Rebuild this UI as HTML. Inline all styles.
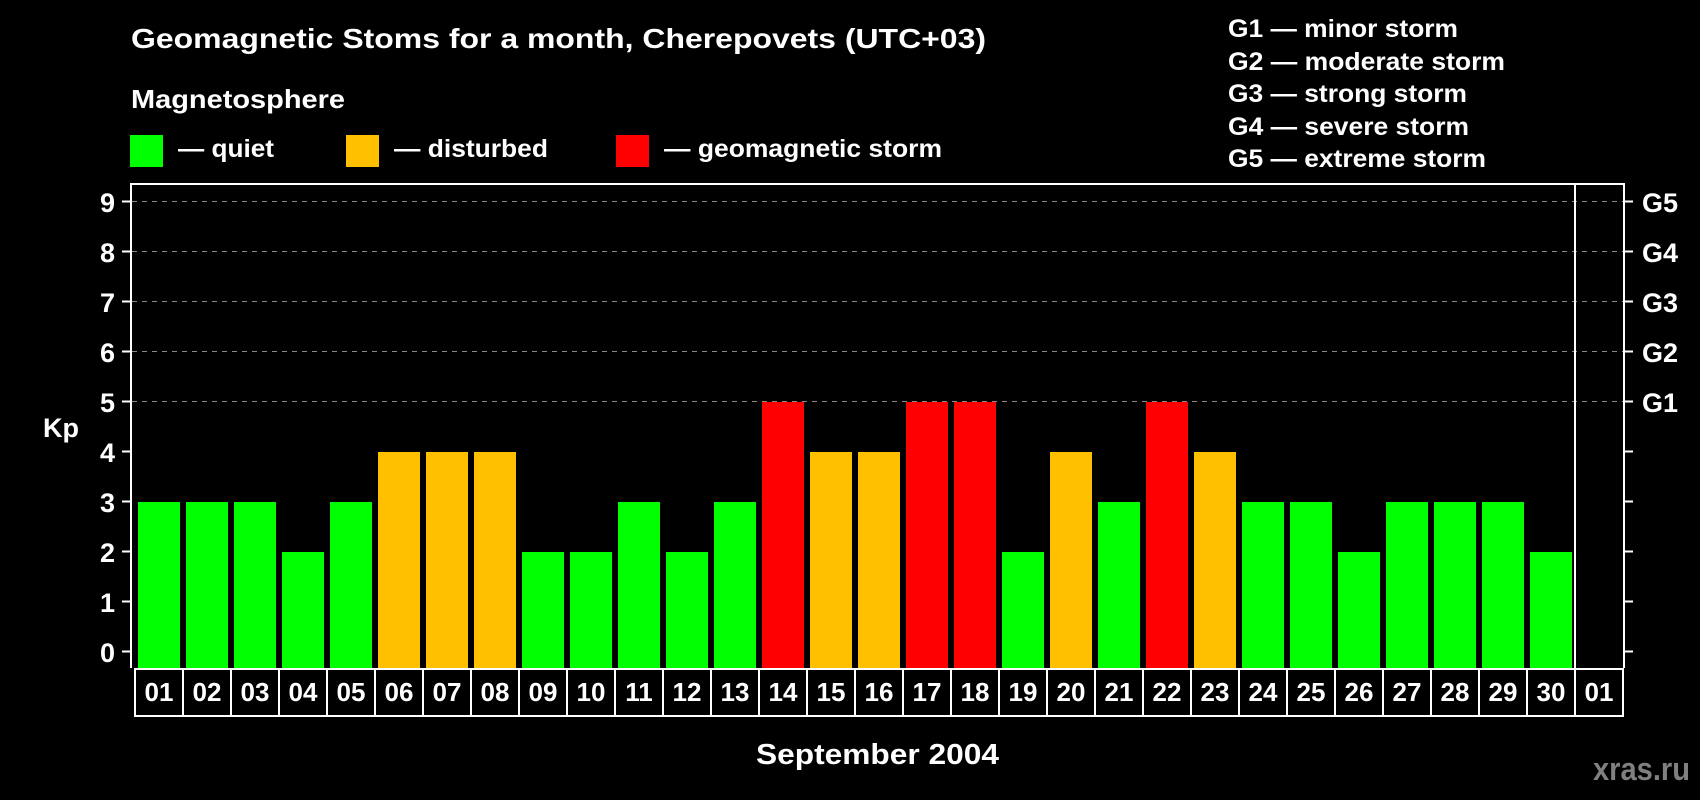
<!DOCTYPE html>
<html><head><meta charset="utf-8"><style>
html,body{margin:0;padding:0;background:#000;width:1700px;height:800px;overflow:hidden}
svg{display:block}
text{font-family:"Liberation Sans",Arial,sans-serif;font-weight:bold;fill:#fff}
</style></head><body>
<svg width="1700" height="800" viewBox="0 0 1700 800" xmlns="http://www.w3.org/2000/svg">
<rect width="1700" height="800" fill="#000"/>
<text x="131" y="48" font-size="28" textLength="855" lengthAdjust="spacingAndGlyphs">Geomagnetic Stoms for a month, Cherepovets (UTC+03)</text>
<text x="131" y="108" font-size="26" textLength="214" lengthAdjust="spacingAndGlyphs">Magnetosphere</text>
<rect x="130" y="135" width="33" height="32" fill="#00ff00"/>
<rect x="346" y="135" width="33" height="32" fill="#ffc000"/>
<rect x="616" y="135" width="33" height="32" fill="#ff0000"/>
<text x="178" y="157" font-size="25" textLength="96" lengthAdjust="spacingAndGlyphs">— quiet</text>
<text x="394" y="157" font-size="25" textLength="154" lengthAdjust="spacingAndGlyphs">— disturbed</text>
<text x="664" y="157" font-size="25" textLength="278" lengthAdjust="spacingAndGlyphs">— geomagnetic storm</text>
<g font-size="25">
<text x="1228" y="37" textLength="230" lengthAdjust="spacingAndGlyphs">G1 — minor storm</text>
<text x="1228" y="70" textLength="277" lengthAdjust="spacingAndGlyphs">G2 — moderate storm</text>
<text x="1228" y="102" textLength="239" lengthAdjust="spacingAndGlyphs">G3 — strong storm</text>
<text x="1228" y="135" textLength="241" lengthAdjust="spacingAndGlyphs">G4 — severe storm</text>
<text x="1228" y="167" textLength="258" lengthAdjust="spacingAndGlyphs">G5 — extreme storm</text>
</g>
<g stroke="#888" stroke-width="1" stroke-dasharray="5,5">
<line x1="132" y1="201.5" x2="1624" y2="201.5"/>
<line x1="132" y1="251.5" x2="1624" y2="251.5"/>
<line x1="132" y1="301.5" x2="1624" y2="301.5"/>
<line x1="132" y1="351.5" x2="1624" y2="351.5"/>
<line x1="132" y1="401.5" x2="1624" y2="401.5"/>
</g>
<g>
<rect x="138" y="502" width="42" height="166" fill="#00ff00"/>
<rect x="186" y="502" width="42" height="166" fill="#00ff00"/>
<rect x="234" y="502" width="42" height="166" fill="#00ff00"/>
<rect x="282" y="552" width="42" height="116" fill="#00ff00"/>
<rect x="330" y="502" width="42" height="166" fill="#00ff00"/>
<rect x="378" y="452" width="42" height="216" fill="#ffc000"/>
<rect x="426" y="452" width="42" height="216" fill="#ffc000"/>
<rect x="474" y="452" width="42" height="216" fill="#ffc000"/>
<rect x="522" y="552" width="42" height="116" fill="#00ff00"/>
<rect x="570" y="552" width="42" height="116" fill="#00ff00"/>
<rect x="618" y="502" width="42" height="166" fill="#00ff00"/>
<rect x="666" y="552" width="42" height="116" fill="#00ff00"/>
<rect x="714" y="502" width="42" height="166" fill="#00ff00"/>
<rect x="762" y="402" width="42" height="266" fill="#ff0000"/>
<rect x="810" y="452" width="42" height="216" fill="#ffc000"/>
<rect x="858" y="452" width="42" height="216" fill="#ffc000"/>
<rect x="906" y="402" width="42" height="266" fill="#ff0000"/>
<rect x="954" y="402" width="42" height="266" fill="#ff0000"/>
<rect x="1002" y="552" width="42" height="116" fill="#00ff00"/>
<rect x="1050" y="452" width="42" height="216" fill="#ffc000"/>
<rect x="1098" y="502" width="42" height="166" fill="#00ff00"/>
<rect x="1146" y="402" width="42" height="266" fill="#ff0000"/>
<rect x="1194" y="452" width="42" height="216" fill="#ffc000"/>
<rect x="1242" y="502" width="42" height="166" fill="#00ff00"/>
<rect x="1290" y="502" width="42" height="166" fill="#00ff00"/>
<rect x="1338" y="552" width="42" height="116" fill="#00ff00"/>
<rect x="1386" y="502" width="42" height="166" fill="#00ff00"/>
<rect x="1434" y="502" width="42" height="166" fill="#00ff00"/>
<rect x="1482" y="502" width="42" height="166" fill="#00ff00"/>
<rect x="1530" y="552" width="42" height="116" fill="#00ff00"/>
</g>
<g stroke="#fff" stroke-width="2" fill="none">
<polyline points="131,668 131,184 1624,184 1624,668"/>
<line x1="1575" y1="184" x2="1575" y2="668"/>
</g>
<g stroke="#fff" stroke-width="2">
<line x1="122" y1="201.5" x2="131" y2="201.5"/><line x1="122" y1="251.5" x2="131" y2="251.5"/>
<line x1="122" y1="301.5" x2="131" y2="301.5"/><line x1="122" y1="351.5" x2="131" y2="351.5"/>
<line x1="122" y1="401.5" x2="131" y2="401.5"/><line x1="122" y1="451.5" x2="131" y2="451.5"/>
<line x1="122" y1="501.5" x2="131" y2="501.5"/><line x1="122" y1="551.5" x2="131" y2="551.5"/>
<line x1="122" y1="601.5" x2="131" y2="601.5"/><line x1="122" y1="651.5" x2="131" y2="651.5"/>
<line x1="1624" y1="201.5" x2="1633" y2="201.5"/><line x1="1624" y1="251.5" x2="1633" y2="251.5"/>
<line x1="1624" y1="301.5" x2="1633" y2="301.5"/><line x1="1624" y1="351.5" x2="1633" y2="351.5"/>
<line x1="1624" y1="401.5" x2="1633" y2="401.5"/><line x1="1624" y1="451.5" x2="1633" y2="451.5"/>
<line x1="1624" y1="501.5" x2="1633" y2="501.5"/><line x1="1624" y1="551.5" x2="1633" y2="551.5"/>
<line x1="1624" y1="601.5" x2="1633" y2="601.5"/><line x1="1624" y1="651.5" x2="1633" y2="651.5"/>
</g>
<g font-size="27" text-anchor="end">
<text x="115" y="212">9</text><text x="115" y="262">8</text><text x="115" y="312">7</text>
<text x="115" y="362">6</text><text x="115" y="412">5</text><text x="115" y="462">4</text>
<text x="115" y="512">3</text><text x="115" y="562">2</text><text x="115" y="612">1</text>
<text x="115" y="662">0</text>
</g>
<g font-size="27">
<text x="1642" y="212">G5</text><text x="1642" y="262">G4</text><text x="1642" y="312">G3</text>
<text x="1642" y="362">G2</text><text x="1642" y="412">G1</text>
</g>
<text x="43" y="437" font-size="27">Kp</text>
<g stroke="#fff" stroke-width="2" fill="none">
<rect x="135" y="669" width="1488" height="47"/>
<path d="M183 669V716M231 669V716M279 669V716M327 669V716M375 669V716M423 669V716M471 669V716M519 669V716M567 669V716M615 669V716M663 669V716M711 669V716M759 669V716M807 669V716M855 669V716M903 669V716M951 669V716M999 669V716M1047 669V716M1095 669V716M1143 669V716M1191 669V716M1239 669V716M1287 669V716M1335 669V716M1383 669V716M1431 669V716M1479 669V716M1527 669V716M1575 669V716"/>
</g>
<g font-size="26" text-anchor="middle">
<text x="159" y="701">01</text><text x="207" y="701">02</text><text x="255" y="701">03</text><text x="303" y="701">04</text>
<text x="351" y="701">05</text><text x="399" y="701">06</text><text x="447" y="701">07</text><text x="495" y="701">08</text>
<text x="543" y="701">09</text><text x="591" y="701">10</text><text x="639" y="701">11</text><text x="687" y="701">12</text>
<text x="735" y="701">13</text><text x="783" y="701">14</text><text x="831" y="701">15</text><text x="879" y="701">16</text>
<text x="927" y="701">17</text><text x="975" y="701">18</text><text x="1023" y="701">19</text><text x="1071" y="701">20</text>
<text x="1119" y="701">21</text><text x="1167" y="701">22</text><text x="1215" y="701">23</text><text x="1263" y="701">24</text>
<text x="1311" y="701">25</text><text x="1359" y="701">26</text><text x="1407" y="701">27</text><text x="1455" y="701">28</text>
<text x="1503" y="701">29</text><text x="1551" y="701">30</text><text x="1599" y="701">01</text>
</g>
<text x="756" y="764" font-size="29" textLength="243" lengthAdjust="spacingAndGlyphs">September 2004</text>
<text x="1593" y="780" font-size="32" style="fill:#808080" textLength="97" lengthAdjust="spacingAndGlyphs">xras.ru</text>
</svg>
</body></html>
